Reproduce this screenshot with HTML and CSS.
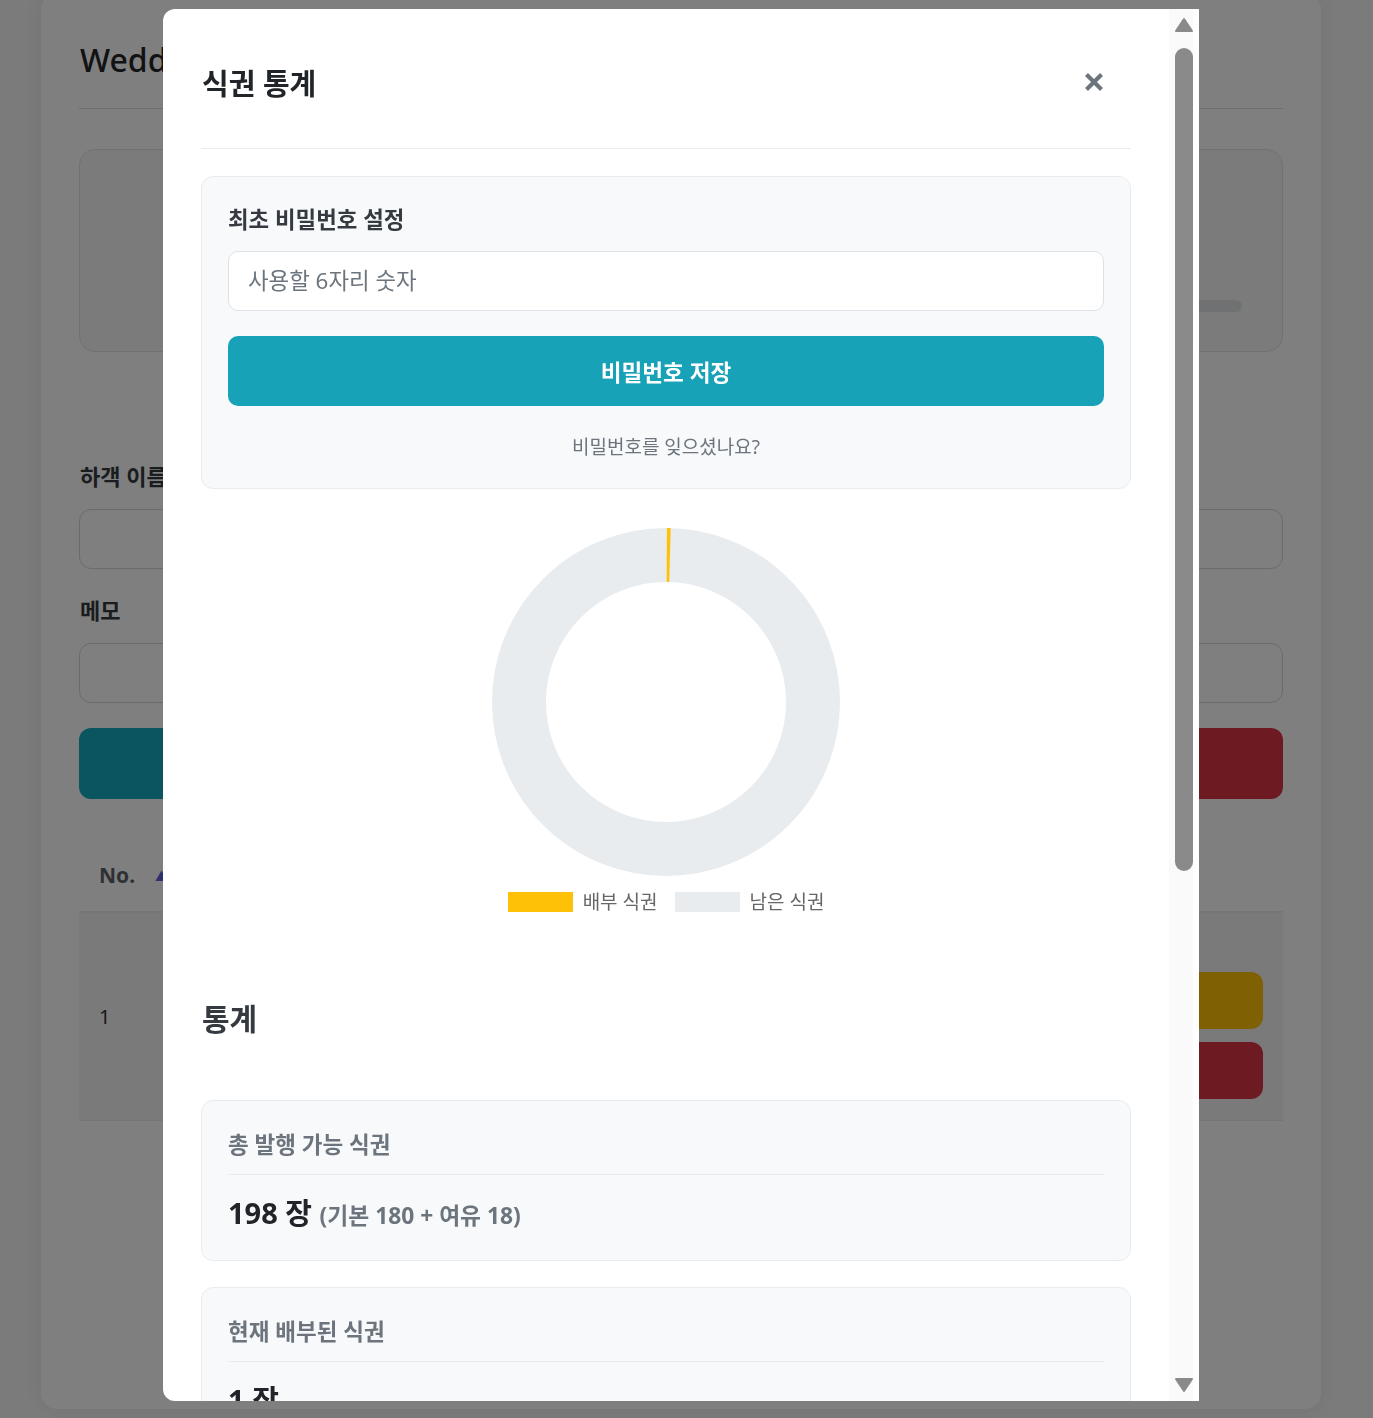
FILE: index.html
```html
<!DOCTYPE html>
<html lang="ko">
<head>
<meta charset="utf-8">
<title>식권 관리</title>
<link rel="stylesheet" href="styles.css">
</head>
<body>
  <div class="page">
    <header class="page-header">
      <h1 class="page-title">Wedding</h1>
    </header>

    <section class="summary-card">
      <div class="progress"><div class="progress-fill" style="width:0.5%"></div></div>
    </section>

    <div class="form">
      <label class="form-label">하객 이름</label>
      <div class="form-input"></div>
      <label class="form-label form-label-gap">메모</label>
      <div class="form-input"></div>
      <div class="form-actions">
        <button class="btn btn-teal">식권 배부</button>
        <button class="btn btn-red">초기화</button>
      </div>
    </div>

    <div class="table">
      <div class="t-head">
        <span class="th-no">No.</span><span class="sort-arrow">▲</span>
        <span class="th-name">이름</span>
      </div>
      <div class="t-row">
        <span class="td-no">1</span>
        <span class="td-name">홍길동</span>
        <div class="td-actions">
          <button class="row-btn row-btn-yellow">수정</button>
          <button class="row-btn row-btn-red">삭제</button>
        </div>
      </div>
    </div>
  </div>

  <div class="backdrop"></div>

  <div class="modal-wrap">
    <div class="modal">
      <div class="modal-body">
        <div class="modal-header">
          <h2 class="modal-title">식권 통계</h2>
          <button class="modal-close" aria-label="닫기">
            <svg width="18" height="18" viewBox="0 0 18 18"><path d="M1.5 1.5 L16.5 16.5 M16.5 1.5 L1.5 16.5" stroke="#6c757d" stroke-width="4.2" fill="none"/></svg>
          </button>
        </div>

        <div class="pw-card">
          <div class="pw-label">최초 비밀번호 설정</div>
          <input class="pw-input" type="password" placeholder="사용할 6자리 숫자">
          <button class="pw-btn">비밀번호 저장</button>
          <div class="pw-forgot">비밀번호를 잊으셨나요?</div>
        </div>

        <div class="chart">
          <svg width="348" height="348" viewBox="0 0 348 348">
            <circle cx="174" cy="174" r="147" fill="none" stroke="#e9ecef" stroke-width="54"/>
            <circle cx="174" cy="174" r="147" fill="none" stroke="#ffc107" stroke-width="54" stroke-dasharray="3.2 2000" stroke-dashoffset="-0.8" transform="rotate(-90 174 174)"/>
          </svg>
        </div>
        <div class="legend">
          <div class="legend-item"><span class="swatch swatch-yellow"></span><span>배부 식권</span></div>
          <div class="legend-item"><span class="swatch swatch-gray"></span><span>남은 식권</span></div>
        </div>

        <h3 class="stats-heading">통계</h3>

        <div class="stats">
          <div class="stat">
            <div class="stat-title">총 발행 가능 식권</div>
            <div class="stat-value">198 장 <span class="stat-sub">(기본 180 + 여유 18)</span></div>
          </div>
          <div class="stat">
            <div class="stat-title">현재 배부된 식권</div>
            <div class="stat-value">1 장</div>
          </div>
          <div class="stat">
            <div class="stat-title">남은 식권</div>
            <div class="stat-value">197 장</div>
          </div>
        </div>
      </div>

      <div class="scrollbar">
        <div class="sb-button">
          <svg width="30" height="39" viewBox="0 0 30 39"><path d="M15 10 L23 22 L7 22 Z" fill="#8a8a8a" stroke="#8a8a8a" stroke-width="2" stroke-linejoin="round"/></svg>
        </div>
        <div class="sb-track"><div class="sb-thumb"></div></div>
        <div class="sb-button">
          <svg width="30" height="39" viewBox="0 0 30 39"><path d="M7 17 L23 17 L15 29 Z" fill="#8a8a8a" stroke="#8a8a8a" stroke-width="2" stroke-linejoin="round"/></svg>
        </div>
      </div>
    </div>
  </div>
</body>
</html>
```
FILE: styles.css
```css
* { box-sizing: border-box; }

html, body {
  margin: 0;
  height: 100%;
  overflow: hidden;
}

body {
  background: #f6f6f6;
  padding-right: 11px;
  font-family: "Noto Sans", "Noto Sans CJK KR", sans-serif;
  color: #212529;
}

/* ---------- background page ---------- */
.page {
  width: 1280px;
  height: 1415px;
  margin: -6px auto 0;
  background: #fff;
  border-radius: 16px;
  box-shadow: 0 0 18px rgba(0, 0, 0, 0.07);
  padding: 0 38px;
}

.page-header {
  padding: 46px 0 28px;
  border-bottom: 1px solid #dcdcdc;
}

.page-title {
  margin: 0 0 0 1px;
  font-size: 32px;
  line-height: 40px;
  font-weight: 500;
  color: #212529;
}

.summary-card {
  margin-top: 40px;
  height: 203px;
  background: #f7f7f7;
  border: 1px solid #e2e2e2;
  border-radius: 16px;
  padding: 150px 40px 0;
  display: flex;
  flex-direction: column;
  align-items: flex-end;
}

.progress {
  width: 900px;
  height: 12px;
  border-radius: 6px;
  background: #dee2e6;
  overflow: hidden;
}

.progress-fill {
  height: 100%;
  background: #ffc107;
}

.form {
  margin-top: 109px;
  display: flex;
  flex-direction: column;
}

.form-label {
  display: block;
  font-size: 22px;
  line-height: 30px;
  font-weight: 700;
  color: #343a40;
  margin-left: 1px;
}

.form-label-gap { margin-top: 26px; }

.form-input {
  margin-top: 18px;
  height: 60px;
  border: 1px solid #d6d6d6;
  border-radius: 12px;
  background: #fff;
}

.form-actions {
  margin-top: 25px;
  display: flex;
  gap: 16px;
}

.btn {
  flex: 1;
  height: 71px;
  border: 0;
  border-radius: 12px;
  color: #fff;
  font-family: inherit;
  font-size: 22px;
  font-weight: 700;
}

.btn-teal { background: #17aac0; }
.btn-red { background: #dc3545; }

.table { margin-top: 40px; }

.t-head {
  display: flex;
  align-items: center;
  height: 74px;
  padding: 0 20px;
  border-bottom: 2px solid #ececec;
}

.th-no {
  font-size: 21px;
  font-weight: 700;
  color: #5c6168;
}

.sort-arrow {
  margin-left: 20px;
  font-size: 13px;
  color: #5660e0;
}

.th-name {
  margin-left: 200px;
  font-size: 21px;
  font-weight: 700;
  color: #5c6168;
}

.t-row {
  display: flex;
  align-items: center;
  height: 208px;
  padding: 0 20px;
  background: #f4f4f4;
  border-bottom: 1px solid #ececec;
}

.td-no {
  font-size: 20px;
  color: #333;
}

.td-name {
  margin-left: 250px;
  font-size: 20px;
  color: #333;
}

.td-actions {
  margin-left: auto;
  padding-top: 38px;
  display: flex;
  flex-direction: column;
  gap: 13px;
}

.row-btn {
  width: 220px;
  height: 57px;
  border: 0;
  border-radius: 12px;
  color: #fff;
  font-family: inherit;
  font-size: 18px;
  font-weight: 700;
}

.row-btn-yellow { background: #ffc107; color: #212529; }
.row-btn-red { background: #dc3545; }

/* ---------- modal ---------- */
.backdrop {
  position: fixed;
  inset: 0;
  background: rgba(0, 0, 0, 0.5);
}

.modal-wrap {
  position: fixed;
  inset: 0;
  padding: 9px 11px 0 0;
  display: flex;
  justify-content: center;
  align-items: flex-start;
}

.modal {
  width: 1036px;
  height: 1392px;
  background: #fff;
  border-radius: 12px 0 0 12px;
  overflow: hidden;
  display: flex;
}

.modal-body {
  flex: 1;
  min-width: 0;
  overflow: hidden;
  padding: 40px 38px 36px;
}

.modal-header {
  display: flex;
  justify-content: space-between;
  align-items: flex-start;
  padding: 18px 0 47px;
  border-bottom: 1px solid #e9ecef;
}

.modal-title {
  margin: 0 0 0 1px;
  font-size: 29px;
  line-height: 34px;
  font-weight: 700;
  color: #212529;
}

.modal-close {
  margin: 6px 28px 0 0;
  padding: 0;
  border: 0;
  background: none;
  width: 18px;
  height: 18px;
  display: flex;
}

.pw-card {
  margin-top: 27px;
  background: #f8f9fa;
  border: 1px solid #e9ecef;
  border-radius: 12px;
  padding: 26px 26px 28px;
  display: flex;
  flex-direction: column;
}

.pw-label {
  font-size: 22.4px;
  line-height: 30px;
  font-weight: 700;
  color: #343a40;
  padding-top: 2px;
  margin-bottom: -2px;
}

.pw-input {
  margin-top: 18px;
  height: 60px;
  width: 100%;
  border: 1px solid #dee2e6;
  border-radius: 10px;
  background: #fff;
  padding: 0 19px 2px;
  font-family: inherit;
  font-size: 22.4px;
  color: #495057;
  outline: none;
}

.pw-input::placeholder { color: #6c757d; }

.pw-btn {
  margin-top: 25px;
  height: 70px;
  width: 100%;
  border: 0;
  border-radius: 10px;
  background: #17a2b8;
  color: #fff;
  font-family: inherit;
  font-size: 22.6px;
  font-weight: 700;
}

.pw-forgot {
  margin-top: 28px;
  text-align: center;
  font-size: 19px;
  line-height: 26px;
  color: #6c757d;
}

.chart {
  margin-top: 39px;
  display: flex;
  justify-content: center;
}

.chart svg { display: block; }

.legend {
  margin-top: 16px;
  display: flex;
  justify-content: center;
  gap: 17px;
}

.legend-item {
  display: flex;
  align-items: center;
  gap: 10px;
  font-size: 19px;
  line-height: 20px;
  color: #666;
}

.swatch {
  width: 65px;
  height: 20px;
}

.swatch-yellow { background: #ffc107; }
.swatch-gray { background: #e9ecef; }

.stats-heading {
  margin: 89px 0 0 1px;
  font-size: 30px;
  line-height: 36px;
  font-weight: 700;
  color: #343a40;
}

.stats {
  margin-top: 63px;
  display: flex;
  flex-direction: column;
  gap: 26px;
}

.stat {
  background: #f8f9fa;
  border: 1px solid #e9ecef;
  border-radius: 12px;
  padding: 29px 26px 29px;
}

.stat-title {
  font-size: 22.5px;
  line-height: 30px;
  font-weight: 700;
  color: #6c757d;
  padding-bottom: 14px;
  border-bottom: 1px solid #e9ecef;
}

.stat-value {
  margin-top: 20px;
  font-size: 29px;
  line-height: 36px;
  height: 36px;
  font-weight: 700;
  color: #212529;
}

.stat-sub {
  font-size: 22.8px;
  line-height: 0;
  color: #6c757d;
}

/* drawn scrollbar of the modal */
.scrollbar {
  width: 30px;
  display: flex;
  flex-direction: column;
  background: linear-gradient(to right, #fafafa 24px, #fff 24px);
}

.sb-button {
  height: 39px;
  flex: none;
}

.sb-button svg { display: block; }

.sb-track {
  flex: 1;
  padding: 0 6px;
}

.sb-thumb {
  height: 823px;
  border-radius: 9px;
  background: #8a8a8a;
}
```
